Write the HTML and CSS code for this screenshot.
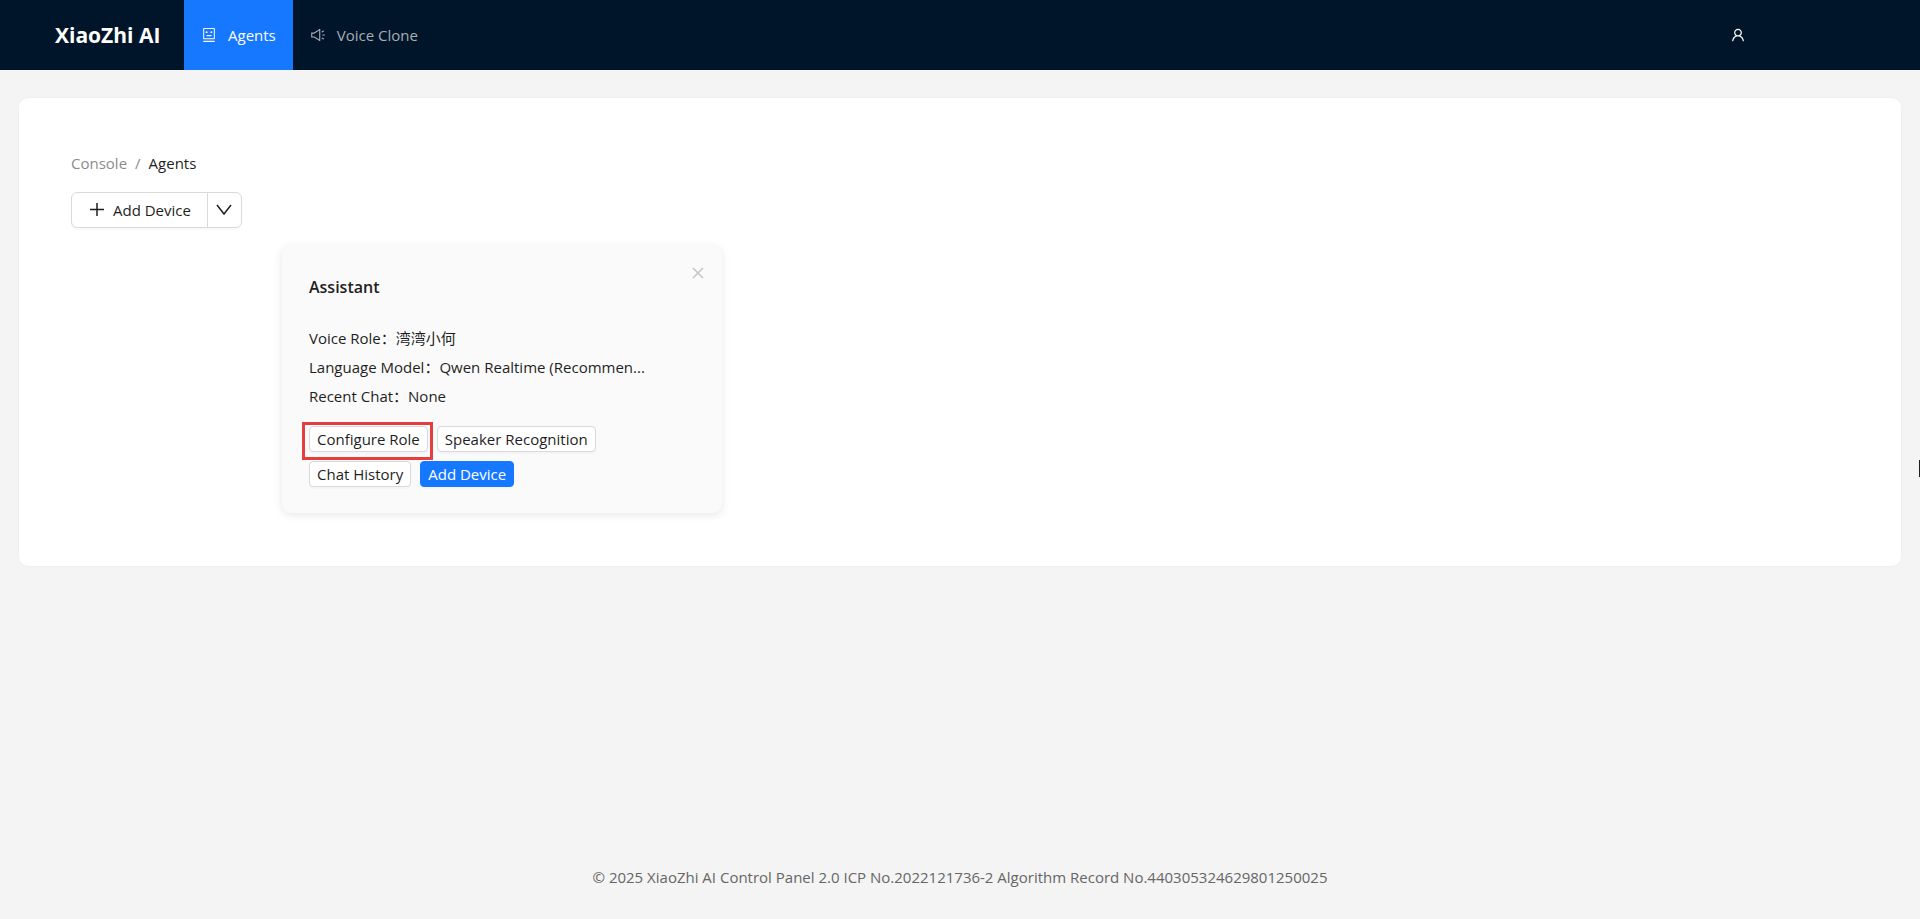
FILE: index.html
```html
<!DOCTYPE html>
<html lang="en">
<head>
  <meta charset="UTF-8" />
  <meta name="viewport" content="width=device-width, initial-scale=1.0"/>
  <title>Agents - XiaoZhi AI</title>
  <link rel="stylesheet" href="styles.css">
</head>
<body>
  <header class="header">
    <a href="#" class="logo">XiaoZhi AI</a>
    <nav class="nav-items">
      <a href="#agents" class="active">
        <svg class="icon" viewBox="0 0 1024 1024" aria-hidden="true"><path d="M852 64H172c-17.7 0-32 14.3-32 32v660c0 17.7 14.3 32 32 32h680c17.7 0 32-14.3 32-32V96c0-17.7-14.3-32-32-32zm-32 660H204V128h616v596zM604 328a60 60 0 10120 0 60 60 0 10-120 0zm250.2 556H169.8c-16.5 0-29.8 14.3-29.8 32v36c0 4.4 3.3 8 7.4 8h729.1c4.1 0 7.4-3.6 7.4-8v-36c.1-17.7-13.2-32-29.7-32zM664 508H360c-4.4 0-8 3.6-8 8v60c0 4.4 3.6 8 8 8h304c4.4 0 8-3.6 8-8v-60c0-4.4-3.6-8-8-8zM300 328a60 60 0 10120 0 60 60 0 10-120 0z"/></svg>
        <span>Agents</span>
      </a>
      <a href="#voice-clone">
        <svg class="icon" viewBox="0 0 1024 1024" aria-hidden="true"><path d="M625.9 115c-5.9 0-11.9 1.6-17.4 5.3L254 352H90c-8.8 0-16 7.2-16 16v288c0 8.8 7.2 16 16 16h164l354.5 231.7c5.5 3.6 11.6 5.3 17.4 5.3 16.7 0 32.1-13.3 32.1-32.1V147.1c0-18.8-15.4-32.1-32.1-32.1zM586 803L293.4 611.7l-18-11.7H146V424h129.4l17.9-11.7L586 221v582zm348-327H806c-8.8 0-16 7.2-16 16v40c0 8.8 7.2 16 16 16h128c8.8 0 16-7.2 16-16v-40c0-8.8-7.2-16-16-16zm-41.9 261.8l-110.3-63.7a15.9 15.9 0 00-21.7 5.9l-19.9 34.5c-4.4 7.6-1.8 17.4 5.8 21.8L856.3 800a15.9 15.9 0 0021.7-5.9l19.9-34.5c4.4-7.6 1.7-17.4-5.8-21.8zM760 344a15.9 15.9 0 0021.7 5.9L892 286.2c7.6-4.4 10.2-14.2 5.8-21.8L878 230a15.9 15.9 0 00-21.7-5.9L746 287.8a15.99 15.99 0 00-5.8 21.8L760 344z"/></svg>
        <span>Voice Clone</span>
      </a>
    </nav>
    <button type="button" class="user-button" aria-label="Account">
      <svg class="icon" viewBox="0 0 1024 1024" aria-hidden="true"><path d="M858.5 763.6a374 374 0 00-80.6-119.5 375.63 375.63 0 00-119.5-80.6c-.4-.2-.8-.3-1.2-.5C719.5 518 760 444.7 760 362c0-137-111-248-248-248S264 225 264 362c0 82.7 40.5 156 102.8 201.1-.4.2-.8.3-1.2.5-44.8 18.9-85 46-119.5 80.6a375.63 375.63 0 00-80.6 119.5A371.7 371.7 0 00136 901.8a8 8 0 008 8.2h60c4.4 0 7.9-3.5 8-7.8 2-77.2 33-149.5 87.8-204.3 56.7-56.7 132-87.9 212.2-87.9s155.5 31.2 212.2 87.9C779 752.7 810 825 812 902.2c.1 4.4 3.6 7.8 8 7.8h60a8 8 0 008-8.2c-1-47.8-10.9-94.3-29.5-138.2zM512 534c-45.9 0-89.1-17.9-121.6-50.4S340 407.9 340 362c0-45.9 17.9-89.1 50.4-121.6S466.1 190 512 190s89.1 17.9 121.6 50.4S684 316.1 684 362c0 45.9-17.9 89.1-50.4 121.6S557.9 534 512 534z"/></svg>
    </button>
  </header>

  <main class="panel">
    <nav class="breadcrumb" aria-label="Breadcrumb">
      <a href="#console">Console</a>
      <span class="separator">/</span>
      <span class="current">Agents</span>
    </nav>

    <div class="device-actions">
      <button type="button" class="add-button">
        <svg class="line-icon" viewBox="0 0 16 16" aria-hidden="true"><path d="M8 1v13M1 7.5h14"/></svg>
        Add Device
      </button>
      <button type="button" class="more-button" aria-label="More">
        <svg class="line-icon" viewBox="0 0 16 16" aria-hidden="true"><path d="M1 3l7 9 7-9"/></svg>
      </button>
    </div>

    <section class="agent-card">
      <button type="button" class="close-button" aria-label="Remove agent">
        <svg viewBox="0 0 12 12" aria-hidden="true"><path d="M1 1l10 10M11 1L1 11"/></svg>
      </button>
      <h2>Assistant</h2>
      <div class="agent-info">
        <p>Voice Role：湾湾小何</p>
        <p>Language Model：Qwen Realtime (Recommen...</p>
        <p>Recent Chat：None</p>
      </div>
      <div class="agent-buttons">
        <button type="button" class="small-button highlighted">Configure Role</button>
        <button type="button" class="small-button">Speaker Recognition</button>
      </div>
      <div class="agent-buttons">
        <button type="button" class="small-button">Chat History</button>
        <button type="button" class="small-button primary">Add Device</button>
      </div>
    </section>
  </main>

  <div class="edge-mark"></div>

  <footer>© 2025 XiaoZhi AI Control Panel 2.0 ICP No.2022121736-2 Algorithm Record No.440305324629801250025</footer>
</body>
</html>
```

FILE: styles.css
```css
* {
  box-sizing: border-box;
  margin: 0;
  padding: 0;
}

body {
  display: flex;
  flex-direction: column;
  min-height: 100vh;
  font-family: "Open Sans", "Noto Sans CJK SC", sans-serif;
  font-size: 15px;
  line-height: 24px;
  color: #1f1f1f;
  background-color: #f4f4f4;
}

button {
  font: inherit;
  color: inherit;
  cursor: pointer;
}

a {
  color: inherit;
  text-decoration: none;
}

.header {
  display: flex;
  align-items: center;
  height: 70px;
  padding: 0 174px 0 55px;
  background-color: #001529;
  color: white;
}

.logo {
  width: 129px;
  font-size: 21px;
  font-weight: 700;
  white-space: nowrap;
}

.nav-items {
  display: flex;
  align-self: stretch;
  flex: 1;
}

.nav-items a {
  display: flex;
  align-items: center;
  gap: 11px;
  padding: 0 17px;
  color: #a6adb4;
}

.nav-items .active {
  background-color: #1677ff;
  color: white;
}

.icon {
  display: block;
  width: 16px;
  height: 16px;
  fill: currentColor;
}

.user-button {
  border: none;
  background: none;
}

.panel {
  margin: 28px 19px 0;
  padding: 53px 52px;
  background-color: white;
  border-radius: 9px;
  box-shadow: 0 0 2px rgba(0, 0, 0, 0.08);
}

.breadcrumb {
  display: flex;
  gap: 8px;
  color: #8c8c8c;
}

.breadcrumb .current {
  color: #1f1f1f;
}

.device-actions {
  display: flex;
  margin: 17px 0;
}

.device-actions button {
  display: flex;
  align-items: center;
  justify-content: center;
  gap: 8px;
  height: 36px;
  background-color: white;
  border: 1px solid #d9d9d9;
  box-shadow: 0 2px 0 rgba(0, 0, 0, 0.02);
}

.device-actions .add-button {
  padding: 0 16px 0 17px;
  border-radius: 6px 0 0 6px;
}

.device-actions .more-button {
  width: 35px;
  margin-left: -1px;
  border-radius: 0 6px 6px 0;
}

.line-icon {
  width: 16px;
  height: 16px;
  fill: none;
  stroke: currentColor;
  stroke-width: 1.5;
}

.agent-card {
  position: relative;
  width: 440px;
  margin-left: 211px;
  padding: 29px 27px 26px;
  background-color: #fafafa;
  border-radius: 9px;
  box-shadow: 0 2px 9px rgba(0, 0, 0, 0.1);
}

.agent-card h2 {
  font-size: 16px;
  font-weight: 600;
  line-height: 26px;
}

.close-button {
  position: absolute;
  top: 16px;
  right: 12px;
  display: flex;
  align-items: center;
  justify-content: center;
  width: 24px;
  height: 24px;
  border: none;
  background: none;
}

.close-button svg {
  width: 12px;
  height: 12px;
  stroke: #c4c4c4;
  stroke-width: 1.5;
}

.agent-info {
  margin: 24px 0 15px;
}

.agent-info p {
  height: 29px;
  line-height: 29px;
  white-space: nowrap;
}

.agent-buttons {
  display: flex;
  gap: 9px;
  margin-bottom: 9px;
}

.agent-buttons:last-child {
  margin-bottom: 0;
}

.small-button {
  position: relative;
  height: 26px;
  padding: 0 7px;
  line-height: 24px;
  background-color: white;
  border: 1px solid #d9d9d9;
  border-radius: 4px;
  box-shadow: 0 2px 0 rgba(0, 0, 0, 0.02);
}

.small-button.primary {
  background-color: #1677ff;
  border-color: #1677ff;
  color: white;
}

.highlighted::after {
  content: "";
  position: absolute;
  inset: -5px -6px -9px -8px;
  border: 3px solid #e53e3e;
}

/* sliver on the right edge of the window */
.edge-mark {
  position: fixed;
  top: 50%;
  right: 0;
  width: 1px;
  height: 17px;
  background-color: #1f1f1f;
}

footer {
  margin-top: auto;
  padding: 28px 56px 30px;
  text-align: center;
  color: #666666;
}
```
